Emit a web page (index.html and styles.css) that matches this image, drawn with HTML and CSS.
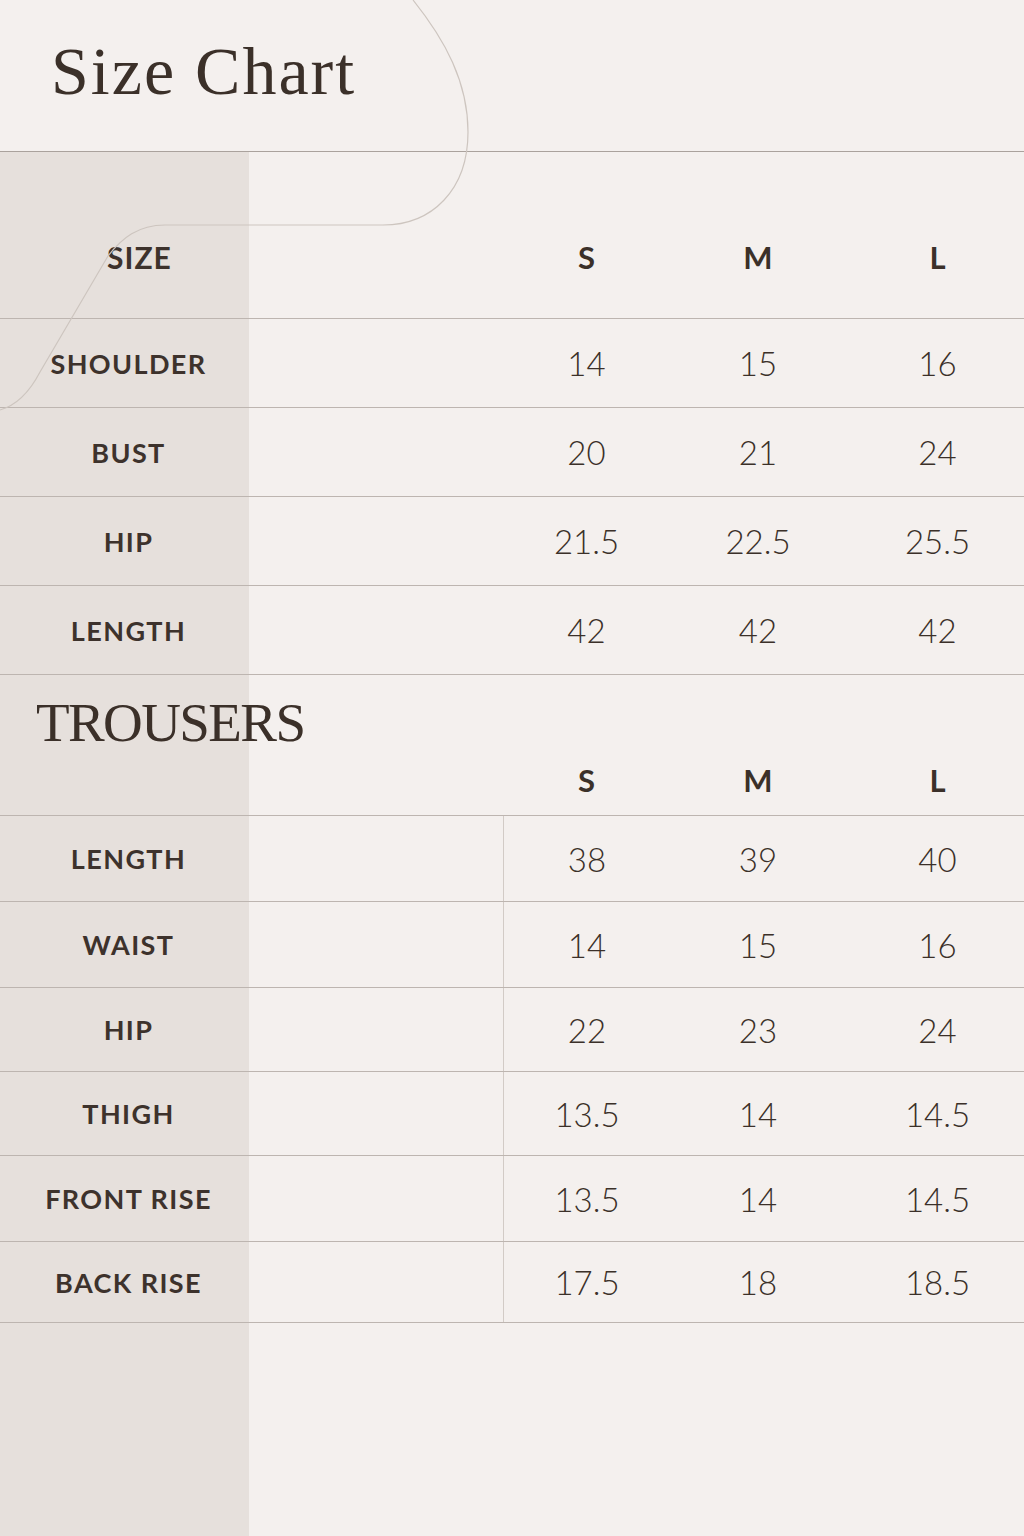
FILE: index.html
```html
<!DOCTYPE html>
<html lang="en">
<head>
<meta charset="utf-8">
<title>Size Chart</title>
<link rel="stylesheet" href="styles.css">
</head>
<body>
<div class="page">
  <svg class="swirl" width="480" height="420" viewBox="0 0 480 420" aria-hidden="true">
    <path d="M413,0 C445,40 468,82 468,132 C468,190 432,225 383,225 L165,225 C138,225 122,238 108,256 L40,372 C28,395 14,406 0,410" fill="none" stroke="#cdc5bf" stroke-width="1.2"/>
  </svg>
  <header class="head">
    <h1 class="title">Size Chart</h1>
  </header>
  <main class="chart">
    <div class="row row-head">
      <div class="label">SIZE</div><div></div>
      <div class="size">S</div><div class="size">M</div><div class="size">L</div>
    </div>
    <div class="row">
      <div class="label">SHOULDER</div><div></div>
      <div class="val">14</div><div class="val">15</div><div class="val">16</div>
    </div>
    <div class="row">
      <div class="label">BUST</div><div></div>
      <div class="val">20</div><div class="val">21</div><div class="val">24</div>
    </div>
    <div class="row">
      <div class="label">HIP</div><div></div>
      <div class="val">21.5</div><div class="val">22.5</div><div class="val">25.5</div>
    </div>
    <div class="row">
      <div class="label">LENGTH</div><div></div>
      <div class="val">42</div><div class="val">42</div><div class="val">42</div>
    </div>
    <section class="trousers">
      <h2 class="sub">TROUSERS</h2>
      <div class="sizes">
        <div class="label"></div><div></div>
        <div class="size">S</div><div class="size">M</div><div class="size">L</div>
      </div>
    </section>
    <div class="row trow">
      <div class="label">LENGTH</div><div></div>
      <div class="val first">38</div><div class="val">39</div><div class="val">40</div>
    </div>
    <div class="row trow">
      <div class="label">WAIST</div><div></div>
      <div class="val first">14</div><div class="val">15</div><div class="val">16</div>
    </div>
    <div class="row trow">
      <div class="label">HIP</div><div></div>
      <div class="val first">22</div><div class="val">23</div><div class="val">24</div>
    </div>
    <div class="row trow">
      <div class="label">THIGH</div><div></div>
      <div class="val first">13.5</div><div class="val">14</div><div class="val">14.5</div>
    </div>
    <div class="row trow">
      <div class="label">FRONT RISE</div><div></div>
      <div class="val first">13.5</div><div class="val">14</div><div class="val">14.5</div>
    </div>
    <div class="row trow">
      <div class="label">BACK RISE</div><div></div>
      <div class="val first">17.5</div><div class="val">18</div><div class="val">18.5</div>
    </div>
  </main>
</div>
</body>
</html>
```
FILE: styles.css
```css
* { box-sizing: border-box; }
html, body { margin: 0; padding: 0; }
body {
  background: #f4f0ee;
  color: #3b3029;
  font-family: "Lato", "Open Sans", sans-serif;
}
.page {
  position: relative;
  width: 1024px;
  height: 1536px;
  overflow: hidden;
  background: #f4f0ee;
}
.swirl {
  position: absolute;
  left: 0;
  top: 0;
  pointer-events: none;
  z-index: 2;
}
.head {
  height: 151px;
  padding: 35px 0 0 51px;
}
.title {
  margin: 0;
  font-family: "Liberation Serif", "DejaVu Serif", serif;
  font-weight: 400;
  font-size: 68px;
  line-height: 72px;
  letter-spacing: 2px;
  color: #3b3029;
}
.chart {
  height: 1385px;
  border-top: 1px solid #aaa29d;
  background: linear-gradient(to right, #e6e0dc 0, #e6e0dc 249px, #f4f0ee 249px);
}
.row, .sizes {
  display: grid;
  grid-template-columns: 249px 254px 167px 176px 1fr;
  align-items: stretch;
}
.row {
  height: 89px;
  border-bottom: 1px solid #bdb5b0;
}
.row-head { height: 167px; }
.row > div, .sizes > div {
  display: flex;
  align-items: center;
  justify-content: center;
}
.row > div:nth-child(5), .sizes > div:nth-child(5) { padding-left: 5px; }
.label {
  font-weight: 700;
  font-size: 27px;
  letter-spacing: 1.4px;
  padding-left: 8px;
  color: #3d322c;
}
.row-head .label {
  padding-left: 30px;
  padding-top: 44px;
  font-size: 30px;
  letter-spacing: 1px;
}
.row-head .size { padding-top: 44px; }
.size {
  font-weight: 700;
  font-size: 31px;
  color: #3b3029;
}
.val {
  font-weight: 300;
  font-size: 33px;
  color: #3b3029;
}
.trousers {
  height: 141px;
  border-bottom: 1px solid #bdb5b0;
}
.sub {
  margin: 0;
  height: 86px;
  padding: 20px 0 0 36px;
  font-family: "Liberation Serif", "DejaVu Serif", serif;
  font-weight: 400;
  font-size: 55px;
  line-height: 56px;
  letter-spacing: -1.6px;
  color: #3b3029;
}
.sizes { height: 54px; padding-bottom: 26px; }
.trow { height: 86px; }
.trow .val.first { border-left: 1px solid #d2cbc6; }
.trow:nth-last-child(4), .trow:nth-last-child(3) { height: 84px; }
.trow:last-child { height: 81px; }
```
